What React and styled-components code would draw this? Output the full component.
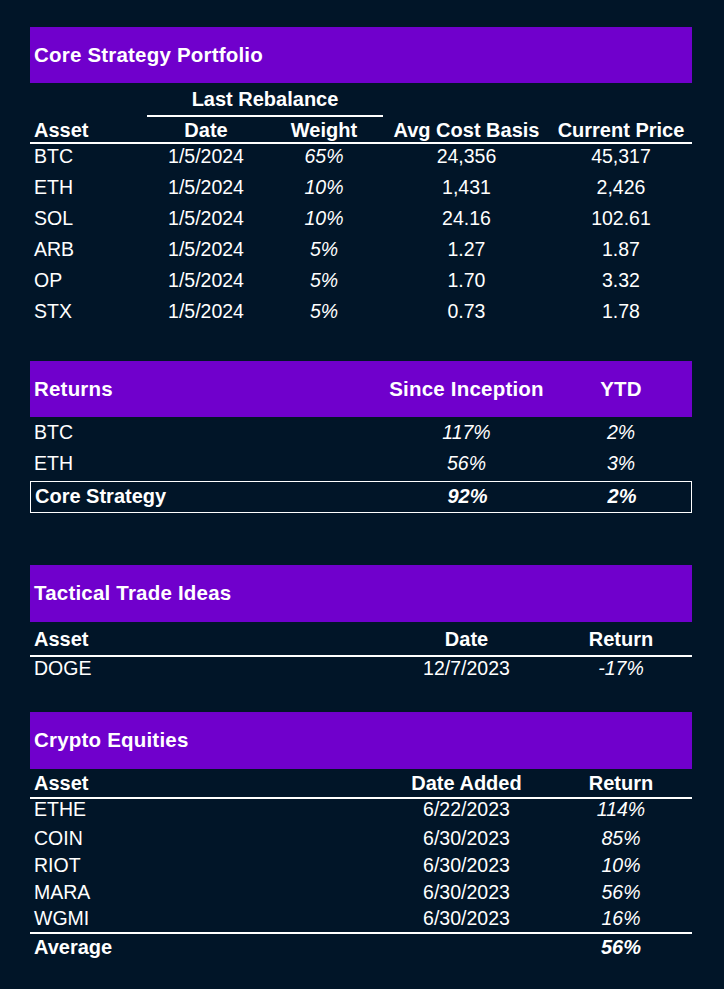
import React from "react";
import styled, { createGlobalStyle } from "styled-components";

const Global = createGlobalStyle`
  html, body {
    margin: 0;
    padding: 0;
    background: #011528;
  }
  body {
    font-family: "Liberation Sans", Arial, sans-serif;
    color: #ffffff;
  }
`;

const COLS5 = "117px 118px 118px 167px 142px";
const COLS3 = "353px 167px 142px";
const PURPLE = "#7000cc";

const Page = styled.div`
  width: 724px;
  min-height: 989px;
  box-sizing: border-box;
  padding: 27px 32px 0 30px;
  display: flex;
  flex-direction: column;
  background: #011528;
`;

const Section = styled.section`
  display: flex;
  flex-direction: column;
  margin-top: ${(p) => p.$mt || 0}px;
`;

const Bar = styled.div`
  display: grid;
  grid-template-columns: ${(p) => p.$cols};
  align-items: center;
  height: ${(p) => p.$h}px;
  background: ${PURPLE};
  font-weight: bold;
  font-size: 20.5px;
  letter-spacing: 0.2px;
`;

const Row = styled.div`
  display: grid;
  grid-template-columns: ${(p) => p.$cols};
  align-items: center;
  box-sizing: border-box;
  height: ${(p) => p.$h}px;
  padding-bottom: ${(p) => p.$pb || 0}px;
  border-bottom: ${(p) => (p.$line ? "2px solid #ffffff" : "none")};
`;

const BoxRow = styled(Row)`
  border: 1px solid #ffffff;
  margin-top: 2px;
`;

const Cell = styled.div`
  white-space: nowrap;
  line-height: 1;
  text-align: ${(p) => (p.$left ? "left" : "center")};
  padding-left: ${(p) => (p.$left ? 4 : 0)}px;
  font-weight: ${(p) => (p.$bold ? "bold" : "normal")};
  font-style: ${(p) => (p.$italic ? "italic" : "normal")};
  font-size: ${(p) => (p.$bold ? 20 : 19.5)}px;
`;

const SpanHead = styled.div`
  grid-column: 2 / 4;
  align-self: stretch;
  display: flex;
  align-items: center;
  justify-content: center;
  border-bottom: 2px solid #ffffff;
  font-weight: bold;
  font-size: 20px;
  white-space: nowrap;
`;

const portfolio = [
  ["BTC", "1/5/2024", "65%", "24,356", "45,317"],
  ["ETH", "1/5/2024", "10%", "1,431", "2,426"],
  ["SOL", "1/5/2024", "10%", "24.16", "102.61"],
  ["ARB", "1/5/2024", "5%", "1.27", "1.87"],
  ["OP", "1/5/2024", "5%", "1.70", "3.32"],
  ["STX", "1/5/2024", "5%", "0.73", "1.78"],
];

const returns = [
  ["BTC", "117%", "2%"],
  ["ETH", "56%", "3%"],
];

const equities = [
  { a: "ETHE", d: "6/22/2023", r: "114%", h: 26, pb: 4 },
  { a: "COIN", d: "6/30/2023", r: "85%", h: 28 },
  { a: "RIOT", d: "6/30/2023", r: "10%", h: 26 },
  { a: "MARA", d: "6/30/2023", r: "56%", h: 27 },
  { a: "WGMI", d: "6/30/2023", r: "16%", h: 28, line: true },
];

export default function App() {
  return (
    <>
      <Global />
      <Page>
        <Section>
          <Bar $cols="1fr" $h={56}>
            <Cell $left $bold as="div" style={{ fontSize: "inherit" }}>
              Core Strategy Portfolio
            </Cell>
          </Bar>
          <Row $cols={COLS5} $h={34}>
            <Cell />
            <SpanHead>Last Rebalance</SpanHead>
          </Row>
          <Row $cols={COLS5} $h={27} $line>
            <Cell $left $bold>Asset</Cell>
            <Cell $bold>Date</Cell>
            <Cell $bold>Weight</Cell>
            <Cell $bold>Avg Cost Basis</Cell>
            <Cell $bold>Current Price</Cell>
          </Row>
          {portfolio.map(([a, d, w, c, p]) => (
            <Row key={a} $cols={COLS5} $h={31} $pb={5}>
              <Cell $left>{a}</Cell>
              <Cell>{d}</Cell>
              <Cell $italic>{w}</Cell>
              <Cell>{c}</Cell>
              <Cell>{p}</Cell>
            </Row>
          ))}
        </Section>

        <Section $mt={31}>
          <Bar $cols={COLS3} $h={56}>
            <Cell $left $bold style={{ fontSize: "inherit" }}>Returns</Cell>
            <Cell $bold style={{ fontSize: "inherit" }}>Since Inception</Cell>
            <Cell $bold style={{ fontSize: "inherit" }}>YTD</Cell>
          </Bar>
          {returns.map(([a, s, y]) => (
            <Row key={a} $cols={COLS3} $h={31}>
              <Cell $left>{a}</Cell>
              <Cell $italic>{s}</Cell>
              <Cell $italic>{y}</Cell>
            </Row>
          ))}
          <BoxRow $cols={COLS3} $h={32} $pb={3}>
            <Cell $left $bold>Core Strategy</Cell>
            <Cell $bold $italic>92%</Cell>
            <Cell $bold $italic>2%</Cell>
          </BoxRow>
        </Section>

        <Section $mt={52}>
          <Bar $cols="1fr" $h={57}>
            <Cell $left $bold style={{ fontSize: "inherit" }}>Tactical Trade Ideas</Cell>
          </Bar>
          <Row $cols={COLS3} $h={35} $line>
            <Cell $left $bold>Asset</Cell>
            <Cell $bold>Date</Cell>
            <Cell $bold>Return</Cell>
          </Row>
          <Row $cols={COLS3} $h={24}>
            <Cell $left>DOGE</Cell>
            <Cell>12/7/2023</Cell>
            <Cell $italic>-17%</Cell>
          </Row>
        </Section>

        <Section $mt={31}>
          <Bar $cols="1fr" $h={57}>
            <Cell $left $bold style={{ fontSize: "inherit" }}>Crypto Equities</Cell>
          </Bar>
          <Row $cols={COLS3} $h={30} $line>
            <Cell $left $bold>Asset</Cell>
            <Cell $bold>Date Added</Cell>
            <Cell $bold>Return</Cell>
          </Row>
          {equities.map((e) => (
            <Row key={e.a} $cols={COLS3} $h={e.h} $pb={e.pb} $line={e.line}>
              <Cell $left>{e.a}</Cell>
              <Cell>{e.d}</Cell>
              <Cell $italic>{e.r}</Cell>
            </Row>
          ))}
          <Row $cols={COLS3} $h={26}>
            <Cell $left $bold>Average</Cell>
            <Cell />
            <Cell $bold $italic>56%</Cell>
          </Row>
        </Section>
      </Page>
    </>
  );
}
